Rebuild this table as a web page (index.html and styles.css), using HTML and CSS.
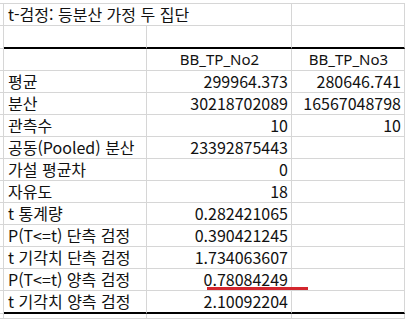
FILE: index.html
```html
<!DOCTYPE html>
<html lang="ko">
<head>
<meta charset="utf-8">
<link rel="stylesheet" href="styles.css">
</head>
<body>
<div class="sheet">
  <div class="c edge"></div><div class="c title span2">t-검정: 등분산 가정 두 집단</div><div class="c"></div>
  <div class="c edge"></div><div class="c thick"></div><div class="c thick"></div><div class="c thick"></div>
  <div class="c edge"></div><div class="c"></div><div class="c ctr">BB_TP_No2</div><div class="c ctr">BB_TP_No3</div>
  <div class="c edge"></div><div class="c">평균</div><div class="c num">299964.373</div><div class="c num">280646.741</div>
  <div class="c edge"></div><div class="c">분산</div><div class="c num">30218702089</div><div class="c num">16567048798</div>
  <div class="c edge"></div><div class="c">관측수</div><div class="c num">10</div><div class="c num">10</div>
  <div class="c edge"></div><div class="c">공동(Pooled) 분산</div><div class="c num">23392875443</div><div class="c num"></div>
  <div class="c edge"></div><div class="c">가설 평균차</div><div class="c num">0</div><div class="c num"></div>
  <div class="c edge"></div><div class="c">자유도</div><div class="c num">18</div><div class="c num"></div>
  <div class="c edge"></div><div class="c">t 통계량</div><div class="c num">0.282421065</div><div class="c num"></div>
  <div class="c edge"></div><div class="c">P(T&lt;=t) 단측 검정</div><div class="c num">0.390421245</div><div class="c num"></div>
  <div class="c edge"></div><div class="c">t 기각치 단측 검정</div><div class="c num">1.734063607</div><div class="c num"></div>
  <div class="c edge"></div><div class="c">P(T&lt;=t) 양측 검정</div><div class="c num">0.78084249</div><div class="c num"></div>
  <div class="c edge"></div><div class="c thick">t 기각치 양측 검정</div><div class="c num thick">2.10092204</div><div class="c num thick"></div>
  <div class="c edge"></div><div class="c"></div><div class="c"></div><div class="c"></div>
  <div class="mark"></div>
</div>
</body>
</html>
```

FILE: styles.css
```css
html, body {
  margin: 0;
  padding: 0;
  background: #fff;
  overflow: hidden;
}
.sheet {
  position: relative;
  display: grid;
  grid-template-columns: 4px 143px 145px 113px;
  grid-template-rows: 22px 23px 22px repeat(10, 22px) 23px 5px;
  margin-top: 3px;
  border-top: 1px solid #d6d6d6;
  font-family: "Noto Sans CJK KR", "Noto Sans", sans-serif;
  font-size: 16px;
  color: #111;
}
.c {
  box-sizing: border-box;
  border-right: 1px solid #d6d6d6;
  border-bottom: 1px solid #d6d6d6;
  padding: 0 3px 0 4px;
  line-height: 21px;
  white-space: nowrap;
  overflow: visible;
}
.edge {
  padding: 0;
}
.span2 {
  grid-column: span 2;
}
.thick {
  border-bottom: 2px solid #000;
}
.ctr {
  text-align: center;
  font-family: "Noto Sans", "Noto Sans CJK KR", sans-serif;
  font-size: 15px;
}
.num {
  text-align: right;
}
.mark {
  position: absolute;
  left: 207px;
  top: 283px;
  width: 101px;
  height: 3px;
  background: #d3262e;
}
```
